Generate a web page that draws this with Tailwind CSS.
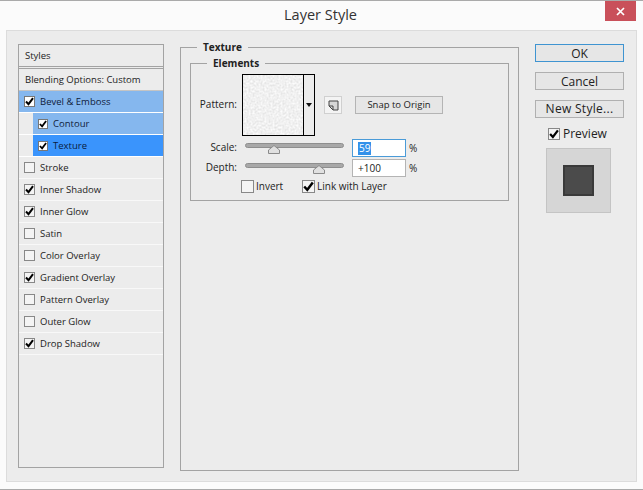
<!DOCTYPE html>
<html lang="en">
<head>
<meta charset="UTF-8">
<title>Layer Style</title>
<script src="https://cdn.jsdelivr.net/npm/@tailwindcss/browser@4"></script>
</head>
<body class="w-[643px] h-[490px] overflow-hidden bg-[#fbfbfb] flex flex-col font-['Open_Sans',sans-serif] text-[10px] text-[#222]">
  <!-- title bar -->
  <div class="h-[30px] shrink-0 border-t border-[#aaa] flex items-center justify-center relative">
    <span class="text-[14.5px] text-[#333] font-['Open_Sans',sans-serif] -mt-[1px] ml-[-2px]">Layer Style</span>
    <div class="absolute right-[7px] top-0 w-[31px] h-[20px] bg-[#c9505a] flex items-center justify-center">
      <svg width="9" height="9" viewBox="0 0 9 9"><path d="M1 1L8 8M8 1L1 8" stroke="#fff" stroke-width="1.7"/></svg>
    </div>
  </div>

  <!-- dialog body -->
  <div class="ml-[6px] mr-[6px] h-[452px] shrink-0 bg-[#ececec] border border-[#dcdcdc] pl-[11px] pt-[13px] flex items-start">
    <!-- styles list -->
    <div class="w-[146px] h-[424px] shrink-0 border border-[#a3a3a3] flex flex-col text-[9.5px] [&_span]:pt-[2px]">
      <div class="h-[22px] shrink-0 border-b border-[#a3a3a3] pl-[6px] flex items-center"><span>Styles</span></div>
      <div class="h-[1px] shrink-0 border-b border-[#a3a3a3] box-content"></div>
      <div class="h-[22px] shrink-0 border-b border-[#c4c4c4] pl-[6px] flex items-center"><span>Blending Options: Custom</span></div>

      <div class="h-[22px] shrink-0 bg-[#85b7ee] border-b border-white pl-[5px] flex items-center gap-[5px] text-[#10203a]">
        <div class="w-[11px] h-[11px] bg-white border border-[#777] flex items-center justify-center"><svg width="9" height="9" viewBox="0 0 9 9"><path d="M1 4.5L3.5 7.2L8 1.2" fill="none" stroke="#000" stroke-width="2"/></svg></div>
        <span>Bevel &amp; Emboss</span>
      </div>
      <div class="h-[22px] shrink-0 flex border-b border-white">
        <div class="w-[14px] shrink-0"></div>
        <div class="flex-1 bg-[#85b7ee] pl-[5px] flex items-center gap-[5px] text-[#10203a]">
          <div class="w-[10px] h-[10px] bg-white border border-[#777] flex items-center justify-center"><svg width="8" height="8" viewBox="0 0 9 9"><path d="M1 4.5L3.5 7.2L8 1.2" fill="none" stroke="#000" stroke-width="2"/></svg></div>
          <span>Contour</span>
        </div>
      </div>
      <div class="h-[22px] shrink-0 flex border-b border-white">
        <div class="w-[14px] shrink-0"></div>
        <div class="flex-1 bg-[#3a94fc] pl-[5px] flex items-center gap-[5px] text-[#0a1c40]">
          <div class="w-[10px] h-[10px] bg-white border border-[#777] flex items-center justify-center"><svg width="8" height="8" viewBox="0 0 9 9"><path d="M1 4.5L3.5 7.2L8 1.2" fill="none" stroke="#000" stroke-width="2"/></svg></div>
          <span>Texture</span>
        </div>
      </div>

      <div class="h-[22px] shrink-0 border-b border-[#f8f8f8] pl-[5px] flex items-center gap-[5px]">
        <div class="w-[11px] h-[11px] bg-[#f4f4f4] border border-[#888]"></div><span>Stroke</span>
      </div>
      <div class="h-[22px] shrink-0 border-b border-[#f8f8f8] pl-[5px] flex items-center gap-[5px]">
        <div class="w-[11px] h-[11px] bg-[#f4f4f4] border border-[#888] flex items-center justify-center"><svg width="9" height="9" viewBox="0 0 9 9"><path d="M1 4.5L3.5 7.2L8 1.2" fill="none" stroke="#000" stroke-width="2"/></svg></div><span>Inner Shadow</span>
      </div>
      <div class="h-[22px] shrink-0 border-b border-[#f8f8f8] pl-[5px] flex items-center gap-[5px]">
        <div class="w-[11px] h-[11px] bg-[#f4f4f4] border border-[#888] flex items-center justify-center"><svg width="9" height="9" viewBox="0 0 9 9"><path d="M1 4.5L3.5 7.2L8 1.2" fill="none" stroke="#000" stroke-width="2"/></svg></div><span>Inner Glow</span>
      </div>
      <div class="h-[22px] shrink-0 border-b border-[#f8f8f8] pl-[5px] flex items-center gap-[5px]">
        <div class="w-[11px] h-[11px] bg-[#f4f4f4] border border-[#888]"></div><span>Satin</span>
      </div>
      <div class="h-[22px] shrink-0 border-b border-[#f8f8f8] pl-[5px] flex items-center gap-[5px]">
        <div class="w-[11px] h-[11px] bg-[#f4f4f4] border border-[#888]"></div><span>Color Overlay</span>
      </div>
      <div class="h-[22px] shrink-0 border-b border-[#f8f8f8] pl-[5px] flex items-center gap-[5px]">
        <div class="w-[11px] h-[11px] bg-[#f4f4f4] border border-[#888] flex items-center justify-center"><svg width="9" height="9" viewBox="0 0 9 9"><path d="M1 4.5L3.5 7.2L8 1.2" fill="none" stroke="#000" stroke-width="2"/></svg></div><span>Gradient Overlay</span>
      </div>
      <div class="h-[22px] shrink-0 border-b border-[#f8f8f8] pl-[5px] flex items-center gap-[5px]">
        <div class="w-[11px] h-[11px] bg-[#f4f4f4] border border-[#888]"></div><span>Pattern Overlay</span>
      </div>
      <div class="h-[22px] shrink-0 border-b border-[#f8f8f8] pl-[5px] flex items-center gap-[5px]">
        <div class="w-[11px] h-[11px] bg-[#f4f4f4] border border-[#888]"></div><span>Outer Glow</span>
      </div>
      <div class="h-[22px] shrink-0 border-b border-[#f8f8f8] pl-[5px] flex items-center gap-[5px]">
        <div class="w-[11px] h-[11px] bg-[#f4f4f4] border border-[#888] flex items-center justify-center"><svg width="9" height="9" viewBox="0 0 9 9"><path d="M1 4.5L3.5 7.2L8 1.2" fill="none" stroke="#000" stroke-width="2"/></svg></div><span>Drop Shadow</span>
      </div>
    </div>

    <!-- texture group -->
    <div class="w-[339px] h-[424px] shrink-0 ml-[16px] mt-[3px] border border-[#a3a3a3] relative pt-[15px] px-[9px]">
      <span class="absolute left-[16px] -top-[7px] bg-[#ececec] px-[6px] font-bold leading-[13px]">Texture</span>
      <!-- elements group -->
      <div class="h-[138px] border border-[#a3a3a3] relative">
        <span class="absolute left-[16px] -top-[7px] bg-[#ececec] px-[6px] font-bold leading-[13px]">Elements</span>
        <div class="flex items-center mt-[10px] h-[62px]">
          <span class="w-[46px] text-right pb-[2px]">Pattern:</span>
          <div class="ml-[5px] w-[73px] h-[62px] border-[1.5px] border-black flex">
            <svg class="w-[60px] h-full border-r-[1.5px] border-black box-content shrink-0" viewBox="0 0 60 60" preserveAspectRatio="none">
              <filter id="grain"><feTurbulence type="fractalNoise" baseFrequency="0.5" numOctaves="3" seed="4"/><feColorMatrix values="0.35 0 0 0 0.7 0.35 0 0 0 0.7 0.35 0 0 0 0.7 0 0 0 0 1"/></filter>
              <rect width="60" height="60" filter="url(#grain)"/>
            </svg>
            <div class="flex-1 flex items-center justify-center"><svg width="6" height="4" viewBox="0 0 6 4"><path d="M0 0H6L3 4Z" fill="#111"/></svg></div>
          </div>
          <div class="ml-[9px] w-[18px] h-[18px] border border-[#d0d0d0] bg-[#f4f4f4] flex items-center justify-center">
            <svg width="11" height="11" viewBox="0 0 11 11"><path d="M1 1H10V10H5L1 6Z" fill="#d8d8d8" stroke="#444"/><path d="M1 6H5V10" fill="none" stroke="#444"/></svg>
          </div>
          <button class="ml-[13px] w-[88px] h-[18px] bg-[#e6e6e6] border border-[#b4b4b4] flex items-center justify-center text-[9.5px] pt-[1px]">Snap to Origin</button>
        </div>

        <div class="flex items-center mt-[3px] h-[18px]">
          <span class="w-[46px] text-right pb-[2px]">Scale:</span>
          <div class="ml-[8px] mb-[5px] w-[99px] h-[5px] rounded-full bg-[#a8a8a8] border border-[#8e8e8e] relative">
            <svg class="absolute left-[22px] top-[1px]" width="12" height="9" viewBox="0 0 12 9"><path d="M6 .5L11.5 5V8.5H.5V5Z" fill="#e0e0e0" stroke="#8a8a8a"/></svg>
          </div>
          <div class="ml-[8px] w-[54px] h-[18px] bg-white border border-[#4a9bd8] pl-[5px] flex items-center"><span class="bg-[#3391ea] text-white leading-[13px] px-px">59</span></div>
          <span class="ml-[3px]">%</span>
        </div>
        <div class="flex items-center mt-[2px] h-[18px]">
          <span class="w-[46px] text-right pb-[2px]">Depth:</span>
          <div class="ml-[8px] mb-[5px] w-[99px] h-[5px] rounded-full bg-[#a8a8a8] border border-[#8e8e8e] relative">
            <svg class="absolute left-[67px] top-[1px]" width="12" height="9" viewBox="0 0 12 9"><path d="M6 .5L11.5 5V8.5H.5V5Z" fill="#e0e0e0" stroke="#8a8a8a"/></svg>
          </div>
          <div class="ml-[8px] w-[54px] h-[18px] bg-white border border-[#b4b4b4] pl-[5px] flex items-center">+100</div>
          <span class="ml-[3px]">%</span>
        </div>
        <div class="flex items-center mt-[2px] ml-[50px] h-[14px]">
          <div class="w-[13px] h-[13px] bg-[#f4f4f4] border border-[#888]"></div>
          <span class="ml-[2px] w-[46px]">Invert</span>
          <div class="w-[13px] h-[13px] bg-[#f4f4f4] border border-[#888] flex items-center justify-center"><svg width="11" height="11" viewBox="0 0 9 9"><path d="M1 4.5L3.5 7.2L8 1.2" fill="none" stroke="#000" stroke-width="2"/></svg></div>
          <span class="ml-[2px]">Link with Layer</span>
        </div>
      </div>
    </div>

    <!-- right buttons -->
    <div class="ml-[16px] w-[89px] shrink-0 flex flex-col text-[12px]">
      <button class="h-[18px] w-[89px] bg-[#e6e6e6] border border-[#3f94d1] flex items-center justify-center pt-[1px]">OK</button>
      <button class="h-[18px] w-[89px] mt-[10px] bg-[#e6e6e6] border border-[#b0b0b0] flex items-center justify-center pt-[1px]">Cancel</button>
      <button class="h-[18px] w-[89px] mt-[10px] bg-[#e6e6e6] border border-[#b0b0b0] flex items-center justify-center tracking-[0.3px]">New Style...</button>
      <div class="flex items-center mt-[9px] ml-[13px] h-[14px] gap-[3px]">
        <div class="w-[12px] h-[12px] bg-[#f4f4f4] border border-[#888] flex items-center justify-center"><svg width="10" height="10" viewBox="0 0 9 9"><path d="M1 4.5L3.5 7.2L8 1.2" fill="none" stroke="#000" stroke-width="2"/></svg></div>
        <span>Preview</span>
      </div>
      <div class="mt-[7px] ml-[11px] w-[65px] h-[65px] bg-[#d6d6d6] border border-[#c4c4c4] flex items-center justify-center">
        <div class="w-[31px] h-[31px] bg-[#4b4b4b] border-2 border-[#3a3a3a]"></div>
      </div>
    </div>
  </div>
  <div class="h-[7px] shrink-0"></div>
  <div class="h-px bg-[#aaa] shrink-0"></div>
</body>
</html>
